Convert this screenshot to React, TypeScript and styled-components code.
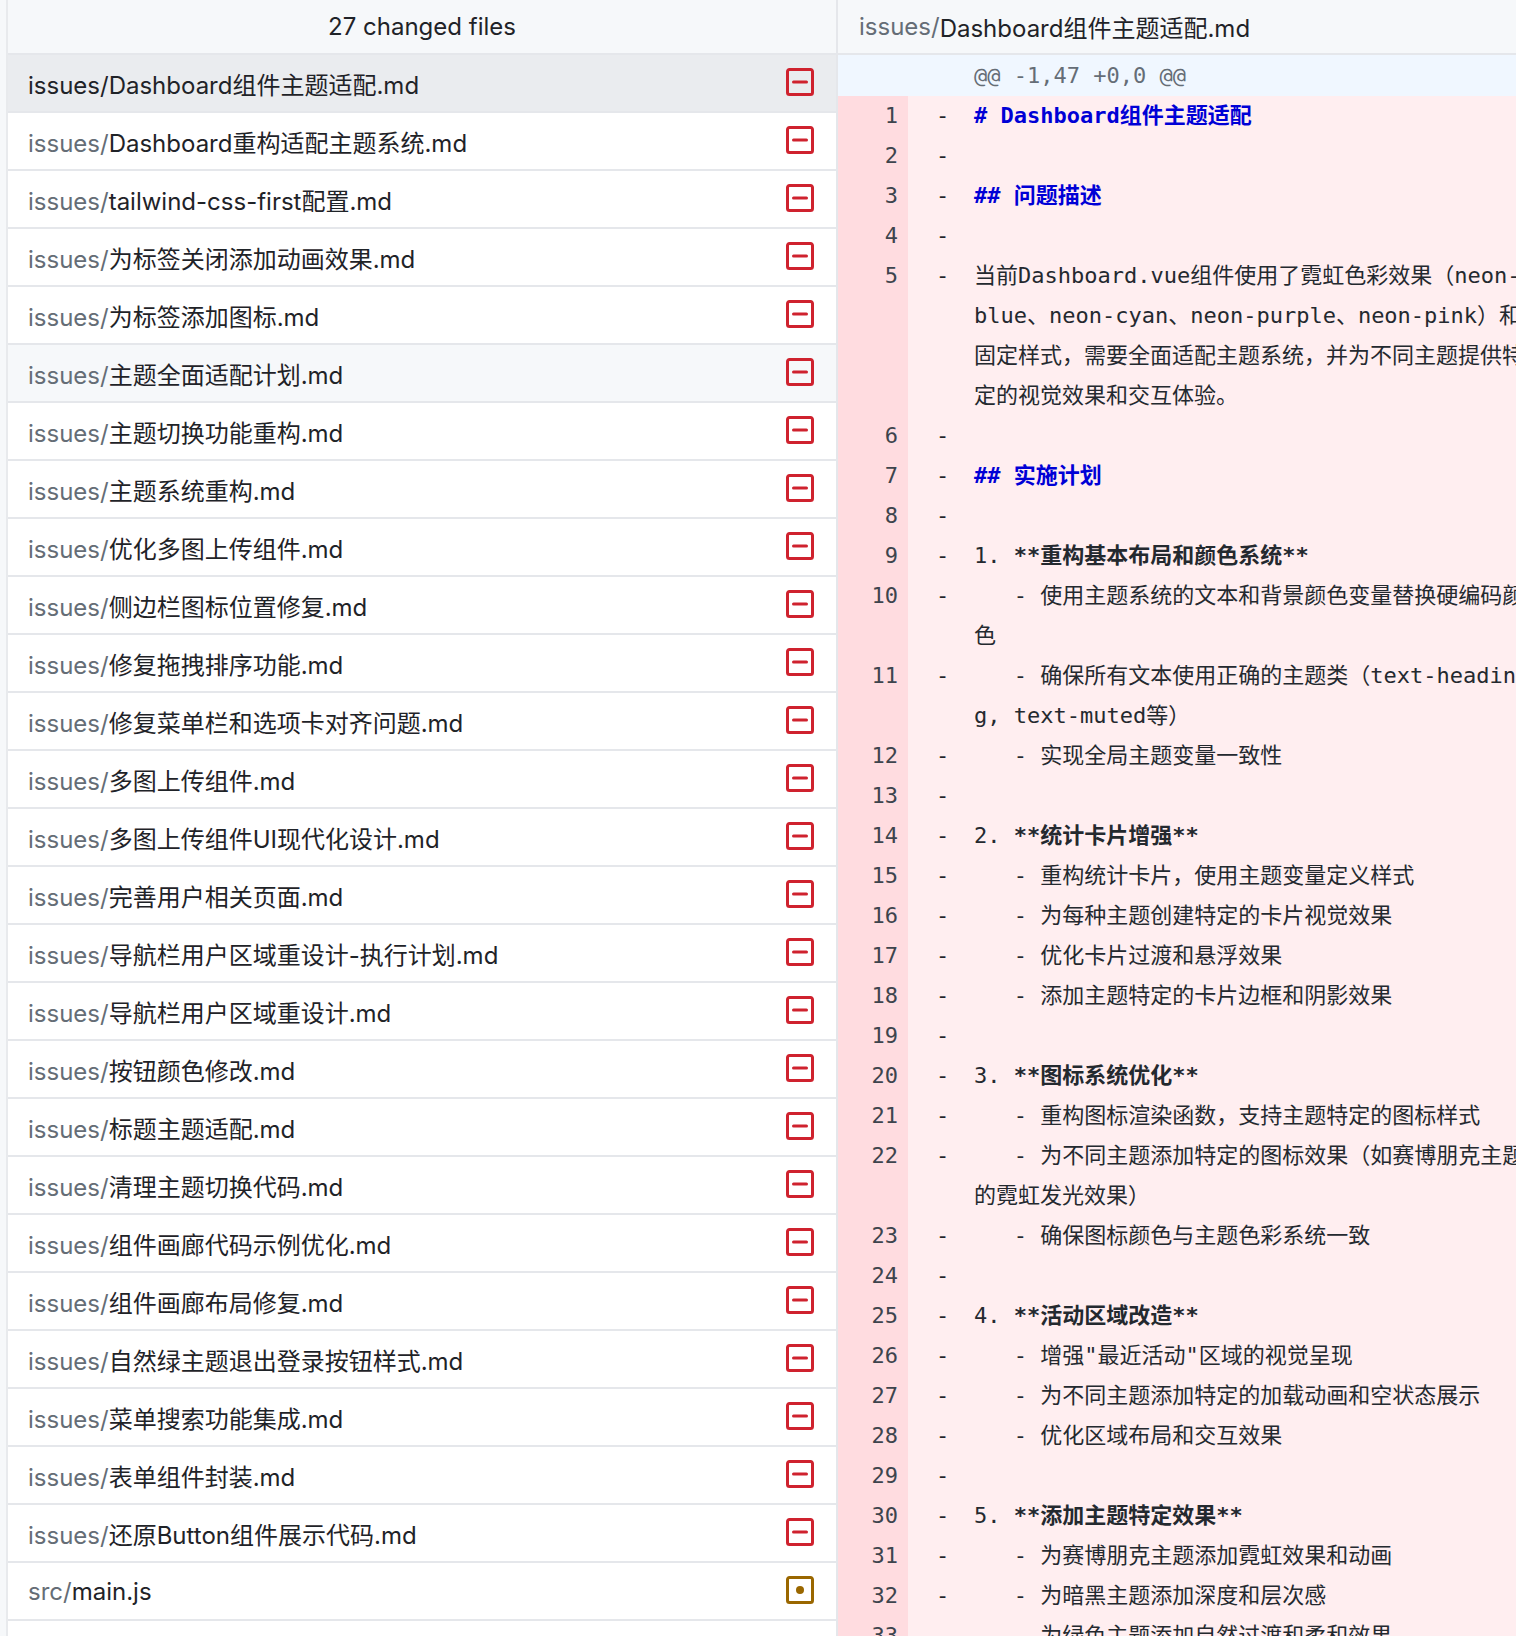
import { createGlobalStyle } from 'styled-components';
import styled from 'styled-components';

type FileStatus = 'removed' | 'modified';

interface ChangedFile {
  dir: string;
  name: string;
  status: FileStatus;
}

interface CodePart {
  text: string;
  bold?: boolean;
}

interface DiffLine {
  no: number;
  rows: CodePart[][];
  heading?: boolean;
}

const issueFiles = [
  'Dashboard组件主题适配.md',
  'Dashboard重构适配主题系统.md',
  'tailwind-css-first配置.md',
  '为标签关闭添加动画效果.md',
  '为标签添加图标.md',
  '主题全面适配计划.md',
  '主题切换功能重构.md',
  '主题系统重构.md',
  '优化多图上传组件.md',
  '侧边栏图标位置修复.md',
  '修复拖拽排序功能.md',
  '修复菜单栏和选项卡对齐问题.md',
  '多图上传组件.md',
  '多图上传组件UI现代化设计.md',
  '完善用户相关页面.md',
  '导航栏用户区域重设计-执行计划.md',
  '导航栏用户区域重设计.md',
  '按钮颜色修改.md',
  '标题主题适配.md',
  '清理主题切换代码.md',
  '组件画廊代码示例优化.md',
  '组件画廊布局修复.md',
  '自然绿主题退出登录按钮样式.md',
  '菜单搜索功能集成.md',
  '表单组件封装.md',
  '还原Button组件展示代码.md',
];

const files: ChangedFile[] = [
  ...issueFiles.map((name): ChangedFile => ({ dir: 'issues/', name, status: 'removed' })),
  { dir: 'src/', name: 'main.js', status: 'modified' },
];

const plain = (no: number, ...rows: string[]): DiffLine => ({
  no,
  rows: rows.map((text) => [{ text }]),
});

const heading = (no: number, text: string): DiffLine => ({
  no,
  heading: true,
  rows: [[{ text, bold: true }]],
});

const section = (no: number, prefix: string, title: string): DiffLine => ({
  no,
  rows: [[{ text: prefix }, { text: title, bold: true }]],
});

const diffLines: DiffLine[] = [
  heading(1, '# Dashboard组件主题适配'),
  plain(2, ''),
  heading(3, '## 问题描述'),
  plain(4, ''),
  plain(
    5,
    '当前Dashboard.vue组件使用了霓虹色彩效果（neon-',
    'blue、neon-cyan、neon-purple、neon-pink）和',
    '固定样式，需要全面适配主题系统，并为不同主题提供特',
    '定的视觉效果和交互体验。'
  ),
  plain(6, ''),
  heading(7, '## 实施计划'),
  plain(8, ''),
  section(9, '1. ', '**重构基本布局和颜色系统**'),
  plain(10, '   - 使用主题系统的文本和背景颜色变量替换硬编码颜', '色'),
  plain(11, '   - 确保所有文本使用正确的主题类（text-headin', 'g, text-muted等）'),
  plain(12, '   - 实现全局主题变量一致性'),
  plain(13, ''),
  section(14, '2. ', '**统计卡片增强**'),
  plain(15, '   - 重构统计卡片，使用主题变量定义样式'),
  plain(16, '   - 为每种主题创建特定的卡片视觉效果'),
  plain(17, '   - 优化卡片过渡和悬浮效果'),
  plain(18, '   - 添加主题特定的卡片边框和阴影效果'),
  plain(19, ''),
  section(20, '3. ', '**图标系统优化**'),
  plain(21, '   - 重构图标渲染函数，支持主题特定的图标样式'),
  plain(22, '   - 为不同主题添加特定的图标效果（如赛博朋克主题', '的霓虹发光效果）'),
  plain(23, '   - 确保图标颜色与主题色彩系统一致'),
  plain(24, ''),
  section(25, '4. ', '**活动区域改造**'),
  plain(26, '   - 增强"最近活动"区域的视觉呈现'),
  plain(27, '   - 为不同主题添加特定的加载动画和空状态展示'),
  plain(28, '   - 优化区域布局和交互效果'),
  plain(29, ''),
  section(30, '5. ', '**添加主题特定效果**'),
  plain(31, '   - 为赛博朋克主题添加霓虹效果和动画'),
  plain(32, '   - 为暗黑主题添加深度和层次感'),
  plain(33, '   - 为绿色主题添加自然过渡和柔和效果'),
];

const GlobalStyle = createGlobalStyle`
  html, body {
    margin: 0;
    padding: 0;
    background: #ffffff;
  }
`;

const Page = styled.div`
  display: flex;
  width: 1516px;
  height: 1636px;
  overflow: hidden;
  background: #ffffff;
  color: #1f2328;
  font-family: Inter, 'Noto Sans CJK SC', sans-serif;
`;

const LeftGutter = styled.div`
  flex: 0 0 6px;
  background: #f6f8fa;
  border-right: 2px solid #e8eaed;
`;

const Sidebar = styled.aside`
  flex: 0 0 828px;
  border-right: 2px solid #e5e7eb;
`;

const SidebarHeader = styled.div`
  height: 53px;
  display: flex;
  align-items: center;
  justify-content: center;
  background: #f6f8fa;
  border-bottom: 2px solid #e5e7eb;
  font-size: 24px;
`;

const FileRow = styled.div<{ $selected?: boolean; $hovered?: boolean }>`
  height: 56px;
  display: flex;
  align-items: center;
  justify-content: space-between;
  padding: 0 20px;
  border-bottom: 2px solid #e5e7eb;
  font-size: 24px;
  background: ${({ $selected, $hovered }) => ($selected ? '#eaecef' : $hovered ? '#f6f8fa' : '#ffffff')};
`;

const FileName = styled.div`
  white-space: nowrap;
`;

const FileDir = styled.span<{ $selected?: boolean }>`
  color: ${({ $selected }) => ($selected ? '#1f2328' : '#656d76')};
`;

const StatusIcon = styled.svg<{ $status: FileStatus }>`
  display: block;
  margin: -2px 0 0;
  width: 32px;
  height: 32px;
  fill: ${({ $status }) => ($status === 'removed' ? '#cf222e' : '#9a6700')};
`;

const DiffPane = styled.main`
  flex: 1;
  min-width: 0;
  overflow: hidden;
`;

const DiffHeader = styled.div`
  height: 53px;
  display: flex;
  align-items: center;
  padding: 0 21px;
  background: #f6f8fa;
  border-bottom: 2px solid #e5e7eb;
  font-size: 24px;
  white-space: nowrap;
`;

const HunkRow = styled.div`
  height: 41px;
  display: flex;
  align-items: center;
  padding-left: 136px;
  background: #ddf4ff;
  background: #f0f7ff;
  color: #656d76;
  font-family: 'DejaVu Sans Mono', 'Noto Sans CJK SC', monospace;
  font-size: 22px;
  white-space: pre;
`;

const CodeRow = styled.div`
  display: flex;
  background: #ffebe9;
  background: #ffeef0;
  font-family: 'DejaVu Sans Mono', 'Noto Sans CJK SC', monospace;
  font-size: 22px;
  line-height: 40px;
  white-space: pre;
`;

const LineNumber = styled.div`
  flex: 0 0 70px;
  box-sizing: border-box;
  padding-right: 10px;
  text-align: right;
  background: #ffdce0;
  color: #3d444d;
`;

const Marker = styled.div`
  flex: 0 0 66px;
  box-sizing: border-box;
  padding-left: 28px;
`;

const CodeText = styled.div<{ $heading?: boolean }>`
  color: ${({ $heading }) => ($heading ? '#0000d6' : '#24292f')};
`;

const CodeLine = styled.div`
  height: 40px;
`;

const Strong = styled.span`
  font-weight: 700;
`;

const App = () => {
  return (
    <Page>
      <GlobalStyle />
      <LeftGutter />
      <Sidebar>
        <SidebarHeader>27 changed files</SidebarHeader>
        {files.map((file, index) => (
          <FileRow key={file.dir + file.name} $selected={index === 0} $hovered={index === 5}>
            <FileName>
              <FileDir $selected={index === 0}>{file.dir}</FileDir>
              {file.name}
            </FileName>
            <StatusIcon $status={file.status} viewBox="0 0 16 16">
              <path d="M13.25 1c.966 0 1.75.784 1.75 1.75v10.5A1.75 1.75 0 0 1 13.25 15H2.75A1.75 1.75 0 0 1 1 13.25V2.75C1 1.784 1.784 1 2.75 1ZM2.75 2.5a.25.25 0 0 0-.25.25v10.5c0 .138.112.25.25.25h10.5a.25.25 0 0 0 .25-.25V2.75a.25.25 0 0 0-.25-.25Z" />
              {file.status === 'removed' ? (
                <path d="M11.25 8.75h-6.5a.75.75 0 0 1 0-1.5h6.5a.75.75 0 0 1 0 1.5Z" />
              ) : (
                <path d="M8 10a2 2 0 1 1 0-4 2 2 0 0 1 0 4Z" />
              )}
            </StatusIcon>
          </FileRow>
        ))}
      </Sidebar>
      <DiffPane>
        <DiffHeader>
          <FileDir>issues/</FileDir>
          Dashboard组件主题适配.md
        </DiffHeader>
        <HunkRow>@@ -1,47 +0,0 @@</HunkRow>
        {diffLines.map((line) => (
          <CodeRow key={line.no}>
            <LineNumber>{line.no}</LineNumber>
            <Marker>-</Marker>
            <CodeText $heading={line.heading}>
              {line.rows.map((parts, rowIndex) => (
                <CodeLine key={rowIndex}>
                  {parts.map((part, partIndex) =>
                    part.bold ? <Strong key={partIndex}>{part.text}</Strong> : <span key={partIndex}>{part.text}</span>
                  )}
                </CodeLine>
              ))}
            </CodeText>
          </CodeRow>
        ))}
      </DiffPane>
    </Page>
  );
};

export default App;
